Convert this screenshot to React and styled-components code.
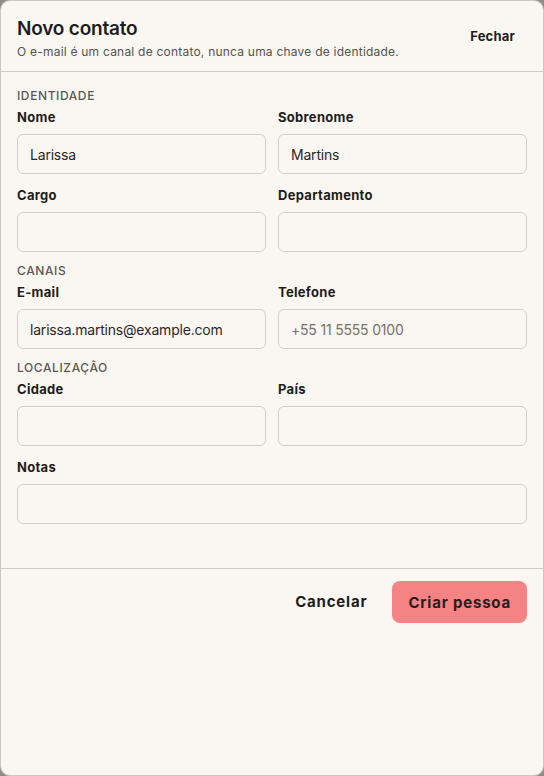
import React from "react";
import styled, { createGlobalStyle } from "styled-components";

const Global = createGlobalStyle`
  html, body { margin: 0; padding: 0; background: #8f8d8a; }
  body { font-family: Inter, "Noto Sans", sans-serif; }
  * { box-sizing: border-box; }
`;

const Card = styled.div`
  width: 544px;
  height: 776px;
  background: #faf7f3;
  border: 1px solid #cbc6bf;
  border-radius: 10px;
  display: flex;
  flex-direction: column;
  overflow: hidden;
  color: #1f1d1b;
`;

const Header = styled.header`
  display: flex;
  justify-content: space-between;
  align-items: flex-start;
  padding: 16px 28px 11px 16px;
  border-bottom: 1px solid #cfcac3;
`;

const TitleBlock = styled.div`
  display: flex;
  flex-direction: column;
  gap: 3px;
`;

const Title = styled.h1`
  margin: 0;
  font-size: 19px;
  line-height: 24px;
  font-weight: 600;
  letter-spacing: -0.2px;
`;

const Subtitle = styled.p`
  margin: 0;
  font-size: 12px;
  line-height: 16px;
  color: #57534f;
  letter-spacing: 0.22px;
`;

const TextButton = styled.button`
  border: 0;
  background: none;
  padding: 0;
  margin-top: ${(p) => p.$top || 0}px;
  font-family: inherit;
  font-weight: 700;
  font-size: ${(p) => p.$size || 13}px;
  line-height: 16px;
  color: #1f1d1b;
  letter-spacing: ${(p) => p.$spacing ?? 0.2}px;
  cursor: pointer;
`;

const Body = styled.div`
  padding: 16px 16px 44px 16px;
  display: flex;
  flex-direction: column;
`;

const SectionTitle = styled.div`
  font-size: 12px;
  line-height: 16px;
  font-weight: 500;
  color: #5b5753;
  letter-spacing: 0.6px;
  text-transform: uppercase;
  margin-top: ${(p) => p.$top || 0}px;
  margin-bottom: 5px;
`;

const Grid = styled.div`
  display: grid;
  grid-template-columns: 1fr 1fr;
  column-gap: 12px;
  row-gap: 13px;
`;

const Field = styled.label`
  display: flex;
  flex-direction: column;
  gap: 8px;
  grid-column: ${(p) => (p.$full ? "1 / -1" : "auto")};
`;

const Label = styled.span`
  font-size: 13px;
  line-height: 17px;
  font-weight: 700;
  letter-spacing: 0.3px;
  color: #1f1d1b;
`;

const Input = styled.input`
  height: 40px;
  width: 100%;
  border: 1px solid #d3cec7;
  border-radius: 6px;
  background: #faf7f3;
  padding: 0 12px;
  font-family: inherit;
  font-size: 14px;
  letter-spacing: -0.2px;
  color: #2a2826;
  outline: none;
  &::placeholder { color: #75716c; }
`;

const Footer = styled.footer`
  border-top: 1px solid #cfcac3;
  padding: 12px 16px;
  display: flex;
  justify-content: flex-end;
  align-items: center;
  gap: 25px;
`;

const Primary = styled.button`
  height: 42px;
  padding: 0 16px;
  border: 0;
  border-radius: 8px;
  background: #f58383;
  font-family: inherit;
  font-size: 15px;
  font-weight: 700;
  color: #2a1c1c;
  letter-spacing: 0.8px;
  cursor: pointer;
`;

function F({ label, value, placeholder, full }) {
  return (
    <Field $full={full}>
      <Label>{label}</Label>
      <Input defaultValue={value} placeholder={placeholder} />
    </Field>
  );
}

export default function App() {
  return (
    <>
      <Global />
      <Card>
        <Header>
          <TitleBlock>
            <Title>Novo contato</Title>
            <Subtitle>O e-mail é um canal de contato, nunca uma chave de identidade.</Subtitle>
          </TitleBlock>
          <TextButton $top={11}>Fechar</TextButton>
        </Header>
        <Body>
          <SectionTitle>Identidade</SectionTitle>
          <Grid>
            <F label="Nome" value="Larissa" />
            <F label="Sobrenome" value="Martins" />
            <F label="Cargo" />
            <F label="Departamento" />
          </Grid>
          <SectionTitle $top={11}>Canais</SectionTitle>
          <Grid>
            <F label="E-mail" value="larissa.martins@example.com" />
            <F label="Telefone" placeholder="+55 11 5555 0100" />
          </Grid>
          <SectionTitle $top={11}>Localização</SectionTitle>
          <Grid>
            <F label="Cidade" />
            <F label="País" />
            <F label="Notas" full />
          </Grid>
        </Body>
        <Footer>
          <TextButton $size={15} $spacing={0.8}>Cancelar</TextButton>
          <Primary>Criar pessoa</Primary>
        </Footer>
      </Card>
    </>
  );
}
